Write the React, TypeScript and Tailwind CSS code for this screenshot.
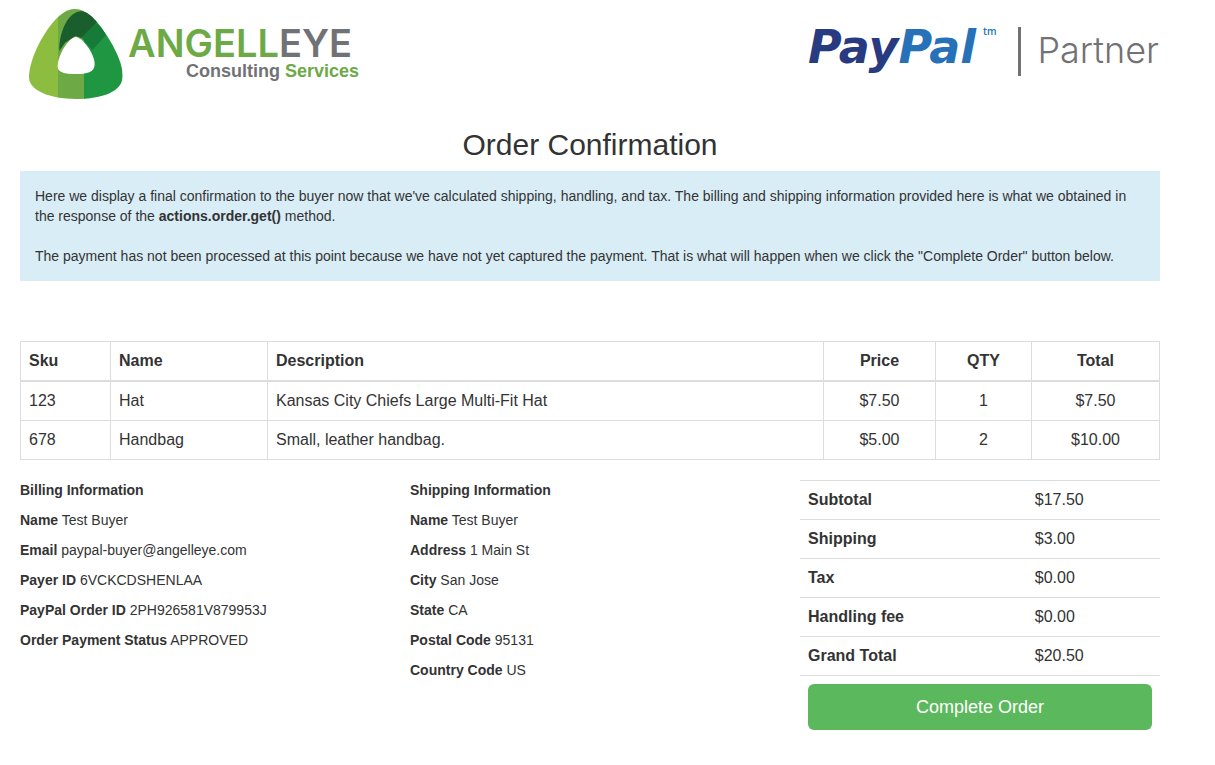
import type { ReactNode } from "react";

const items = [
  { sku: "123", name: "Hat", description: "Kansas City Chiefs Large Multi-Fit Hat", price: "$7.50", qty: 1, total: "$7.50" },
  { sku: "678", name: "Handbag", description: "Small, leather handbag.", price: "$5.00", qty: 2, total: "$10.00" },
];

const billing = [
  ["Name", "Test Buyer"],
  ["Email", "paypal-buyer@angelleye.com"],
  ["Payer ID", "6VCKCDSHENLAA"],
  ["PayPal Order ID", "2PH926581V879953J"],
  ["Order Payment Status", "APPROVED"],
];

const shipping = [
  ["Name", "Test Buyer"],
  ["Address", "1 Main St"],
  ["City", "San Jose"],
  ["State", "CA"],
  ["Postal Code", "95131"],
  ["Country Code", "US"],
];

const totals = [
  ["Subtotal", "$17.50"],
  ["Shipping", "$3.00"],
  ["Tax", "$0.00"],
  ["Handling fee", "$0.00"],
  ["Grand Total", "$20.50"],
];

function AngellEyeLogo() {
  return (
    <svg width="350" height="108" viewBox="0 0 350 108" role="img" aria-label="Angell Eye Consulting Services">
      <defs>
        <clipPath id="mark">
          <path d="M180 27C152 27 128 50 110 72C75 115 42 185 42 232C42 272 105 297 182 297C262 297 323 275 323 228C323 180 285 115 246 66C226 42 205 27 180 27Z" />
        </clipPath>
      </defs>
      <g transform="translate(-5 0) scale(0.33333)">
        <g clipPath="url(#mark)">
          <path fill="#8dbd40" d="M30 0H130V310H30Z" />
          <path fill="#6daa46" d="M129 0H208V310H129Z" />
          <path fill="#1f9742" d="M207 60H340V310H207Z" />
          <path fill="#167b38" d="M238 66L262 84L273 105L232 150L198 112Z" />
          <path fill="#1a5e2d" d="M133 153C132 95 160 35 198 34C215 34 232 45 246 66L198 114L182 108L150 128Z" />
        </g>
        <path fill="#fff" d="M182 111C164 111 128 162 128 200C128 219 155 222 183 222C215 222 239 218 239 192C239 162 202 111 182 111Z" />
      </g>
      <text x="108" y="57" fontFamily="Inter, sans-serif" fontWeight="600" fontSize="38" fill="#6daa46">
        ANGELL<tspan fill="#717275">EYE</tspan>
      </text>
      <text x="339" y="77" textAnchor="end" fontFamily="'Liberation Sans', sans-serif" fontWeight="700" fontSize="18" fill="#717275">
        Consulting <tspan fill="#6daa46">Services</tspan>
      </text>
    </svg>
  );
}

function PayPalPartnerLogo() {
  return (
    <svg width="352" height="108" viewBox="0 0 352 108" role="img" aria-label="PayPal Partner">
      <text x="0" y="63" fontFamily="'DejaVu Sans', sans-serif" fontStyle="italic" fontWeight="700" fontSize="46" fill="#283a80">
        Pay<tspan fill="#2671b8">Pal</tspan>
      </text>
      <text x="175" y="35" fontFamily="'Open Sans', sans-serif" fontWeight="600" fontSize="10" fill="#2671b8">
        tm
      </text>
      <path d="M210 27H213V76H210Z" fill="#717275" />
      <text x="351" y="63" textAnchor="end" fontFamily="Inter, sans-serif" fontWeight="300" fontSize="36" fill="#717275">
        Partner
      </text>
    </svg>
  );
}

function Details({ title, rows }: { title: string; rows: string[][] }) {
  return (
    <section className="flex flex-col gap-[10px]">
      <h3 className="font-bold">{title}</h3>
      {rows.map(([label, value]) => (
        <p key={label}>
          <strong>{label}</strong> {value}
        </p>
      ))}
    </section>
  );
}

function Cell({ children, center }: { children: ReactNode; center?: boolean }) {
  return <td className={center ? "border border-[#ddd] p-2 text-center" : "border border-[#ddd] p-2"}>{children}</td>;
}

export default function App() {
  const head = "border border-b-2 border-[#ddd] p-2";
  return (
    <main className="max-w-[1215px] bg-white pb-9 pl-5 pr-[55px] font-['Liberation_Sans',Arial,sans-serif] text-sm leading-5 text-[#333]">
      <header className="flex items-start justify-between">
        <AngellEyeLogo />
        <PayPalPartnerLogo />
      </header>

      <h1 className="mt-5 mb-[10px] text-center text-[30px] leading-[33px]">Order Confirmation</h1>

      <div className="bg-[#d9edf7] p-[15px]">
        <p>
          Here we display a final confirmation to the buyer now that we've calculated shipping, handling, and tax. The billing and
          shipping information provided here is what we obtained in the response of the <strong>actions.order.get()</strong> method.
        </p>
        <p className="mt-5">
          The payment has not been processed at this point because we have not yet captured the payment. That is what will happen when
          we click the "Complete Order" button below.
        </p>
      </div>

      <table className="mt-[60px] w-full table-fixed border-collapse text-base leading-[22px]">
        <colgroup>
          <col className="w-[90px]" />
          <col className="w-[157px]" />
          <col />
          <col className="w-[112px]" />
          <col className="w-[96px]" />
          <col className="w-[128px]" />
        </colgroup>
        <thead>
          <tr className="text-left">
            <th className={head}>Sku</th>
            <th className={head}>Name</th>
            <th className={head}>Description</th>
            <th className="border border-b-2 border-[#ddd] p-2 text-center">Price</th>
            <th className="border border-b-2 border-[#ddd] p-2 text-center">QTY</th>
            <th className="border border-b-2 border-[#ddd] p-2 text-center">Total</th>
          </tr>
        </thead>
        <tbody>
          {items.map((item) => (
            <tr key={item.sku}>
              <Cell>{item.sku}</Cell>
              <Cell>{item.name}</Cell>
              <Cell>{item.description}</Cell>
              <Cell center>{item.price}</Cell>
              <Cell center>{item.qty}</Cell>
              <Cell center>{item.total}</Cell>
            </tr>
          ))}
        </tbody>
      </table>

      <div className="mt-5 grid grid-cols-3 gap-x-[30px]">
        <Details title="Billing Information" rows={billing} />
        <Details title="Shipping Information" rows={shipping} />
        <section>
          <table className="w-full table-fixed border-collapse text-base leading-[22px]">
            <tbody>
              {totals.map(([label, value]) => (
                <tr key={label} className="border-y border-[#ddd]">
                  <th scope="row" className="w-[63%] p-2 text-left">
                    {label}
                  </th>
                  <td className="p-2">{value}</td>
                </tr>
              ))}
            </tbody>
          </table>
          <div className="px-2 pt-2">
            <button type="button" className="w-full rounded-md bg-[#5cb85c] py-[11px] text-lg leading-6 text-white">
              Complete Order
            </button>
          </div>
        </section>
      </div>
    </main>
  );
}
